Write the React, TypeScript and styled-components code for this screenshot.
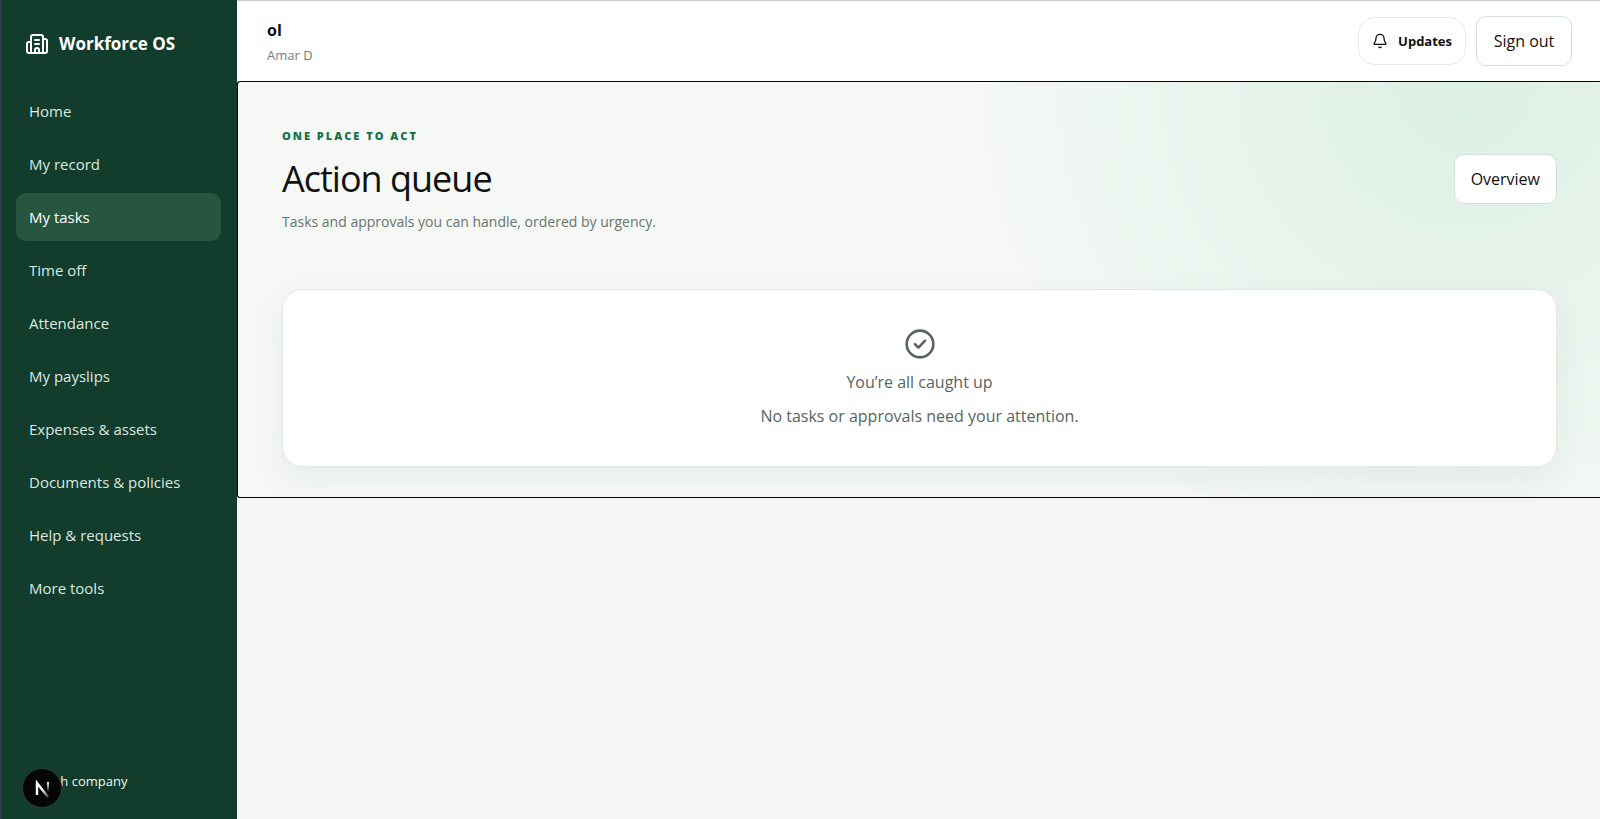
import React from "react";
import styled, { createGlobalStyle, css } from "styled-components";
import { Bell, Building2 } from "lucide-react";

const GlobalStyle = createGlobalStyle`
  *, *::before, *::after { box-sizing: border-box; }
  body {
    margin: 0;
    background: #f4f6f4;
    color: #111;
    font-family: "Open Sans", "Noto Sans", sans-serif;
    font-size: 16px;
    line-height: 24px;
  }
  a { color: inherit; text-decoration: none; }
  h1, p { margin: 0; }
`;

const Shell = styled.div`
  display: grid;
  grid-template-columns: 237px minmax(0, 1fr);
  min-height: 100vh;
`;

const Sidebar = styled.aside`
  display: flex;
  flex-direction: column;
  padding: 28px 16px 26px 14px;
  border-left: 2px solid #35384a;
  background: #123c2c;
  color: #fff;
`;

const Brand = styled.a`
  display: flex;
  align-items: center;
  gap: 10px;
  padding: 4px 9px;
  font-size: 17px;
  font-weight: 700;
`;

const Nav = styled.nav`
  display: flex;
  flex-direction: column;
  gap: 5px;
  margin-top: 27px;
`;

const NavLink = styled.a<{ $active?: boolean }>`
  padding: 12px 13px;
  border-radius: 10px;
  font-size: 15px;
  color: #dce9e1;
  ${({ $active }) =>
    $active &&
    css`
      background: #265540;
      color: #fff;
    `}
`;

const CompanyLink = styled.a`
  margin-top: auto;
  padding: 0 13px;
  font-size: 13px;
  color: #eef5f0;
`;

const Page = styled.div`
  display: flex;
  flex-direction: column;
  min-width: 0;
`;

const Header = styled.header`
  display: flex;
  align-items: center;
  justify-content: space-between;
  padding: 15px 28px 15px 30px;
  border-top: 1px solid #c9cbca;
  background: #fff;
`;

const Account = styled.div`
  display: flex;
  flex-direction: column;
  gap: 2px;
  padding-top: 2px;
`;

const Company = styled.strong`
  font-size: 16px;
  font-weight: 700;
`;

const Person = styled.span`
  font-size: 13px;
  line-height: 22px;
  color: #74807a;
`;

const Actions = styled.div`
  display: flex;
  align-items: center;
  gap: 10px;
`;

const Button = styled.button`
  min-width: 96px;
  padding: 12px 16px;
  border: 1px solid #d3dfd8;
  border-radius: 10px;
  background: #fff;
  color: #111;
  font: inherit;
  white-space: nowrap;
`;

const UpdatesButton = styled(Button)`
  display: flex;
  align-items: center;
  gap: 10px;
  padding: 11px 13px;
  border-color: #e6ebe8;
  border-radius: 16px;
  font-size: 13px;
  font-weight: 700;
`;

const Main = styled.main`
  padding: 44px 43px 30px 44px;
  border: 1px solid #050505;
  border-right: 0;
  border-radius: 3px 0 0 3px;
  background: radial-gradient(circle at 90% 0, #dcf0e4, rgba(220, 240, 228, 0) 38%), #f5f8f5;
`;

const Intro = styled.div`
  display: flex;
  align-items: center;
  justify-content: space-between;
`;

const Eyebrow = styled.p`
  font-size: 11px;
  line-height: 20px;
  font-weight: 800;
  letter-spacing: 2px;
  text-transform: uppercase;
  color: #15714b;
`;

const Title = styled.h1`
  margin: 8px 0;
  font-size: 36px;
  line-height: 50px;
  font-weight: 400;
  letter-spacing: -1px;
`;

const Lead = styled.p`
  font-size: 14px;
  line-height: 20px;
  color: #68756e;
`;

const EmptyCard = styled.section`
  display: flex;
  flex-direction: column;
  align-items: center;
  gap: 10px;
  margin-top: 57px;
  padding: 38px 24px;
  border: 1px solid #e2e8e4;
  border-radius: 20px;
  background: #fff;
  box-shadow: 0 12px 36px rgba(18, 50, 40, 0.06);
  color: #56655e;
  text-align: center;
`;

const DevBadge = styled.button`
  position: fixed;
  left: 22px;
  bottom: 11px;
  width: 40px;
  height: 40px;
  padding: 0;
  border: 1px solid #343a37;
  border-radius: 50%;
  background: #040706;
`;

const links = [
  "Home",
  "My record",
  "My tasks",
  "Time off",
  "Attendance",
  "My payslips",
  "Expenses & assets",
  "Documents & policies",
  "Help & requests",
  "More tools",
];

function DoneIcon() {
  return (
    <svg
      width="32"
      height="32"
      viewBox="0 0 24 24"
      fill="none"
      stroke="currentColor"
      strokeWidth="2"
      strokeLinecap="round"
      strokeLinejoin="round"
      aria-hidden="true"
    >
      <circle cx="12" cy="12" r="10" />
      <path d="M8.2 12.1l2.6 2.6 5-5.2" />
    </svg>
  );
}

function NextLogo() {
  return (
    <svg width="38" height="38" viewBox="0 0 38 38" fill="none" aria-hidden="true">
      <defs>
        <linearGradient id="diagonal" x1="20" y1="20" x2="26" y2="28" gradientUnits="userSpaceOnUse">
          <stop stopColor="#fff" />
          <stop offset="1" stopColor="#fff" stopOpacity="0.2" />
        </linearGradient>
        <linearGradient id="stem" x1="25" y1="13" x2="25" y2="23" gradientUnits="userSpaceOnUse">
          <stop stopColor="#fff" />
          <stop offset="1" stopColor="#fff" stopOpacity="0" />
        </linearGradient>
      </defs>
      <path d="M14 26V14L25 28" stroke="url(#diagonal)" strokeWidth="2.4" />
      <path d="M25 13v10" stroke="url(#stem)" strokeWidth="2" />
    </svg>
  );
}

export default function App() {
  return (
    <>
      <GlobalStyle />
      <Shell>
        <Sidebar>
          <Brand href="#">
            <Building2 size={24} aria-hidden="true" />
            Workforce OS
          </Brand>
          <Nav aria-label="Main">
            {links.map((label) => (
              <NavLink
                key={label}
                href="#"
                $active={label === "My tasks"}
                aria-current={label === "My tasks" ? "page" : undefined}
              >
                {label}
              </NavLink>
            ))}
          </Nav>
          <CompanyLink href="#">Switch company</CompanyLink>
        </Sidebar>
        <Page>
          <Header>
            <Account>
              <Company>ol</Company>
              <Person>Amar D</Person>
            </Account>
            <Actions>
              <UpdatesButton type="button">
                <Bell size={16} aria-hidden="true" />
                Updates
              </UpdatesButton>
              <Button type="button">Sign out</Button>
            </Actions>
          </Header>
          <Main>
            <Intro>
              <div>
                <Eyebrow>One place to act</Eyebrow>
                <Title>Action queue</Title>
                <Lead>Tasks and approvals you can handle, ordered by urgency.</Lead>
              </div>
              <Button type="button">Overview</Button>
            </Intro>
            <EmptyCard>
              <DoneIcon />
              <p>You’re all caught up</p>
              <p>No tasks or approvals need your attention.</p>
            </EmptyCard>
          </Main>
        </Page>
      </Shell>
      <DevBadge type="button" aria-label="Open developer tools">
        <NextLogo />
      </DevBadge>
    </>
  );
}
